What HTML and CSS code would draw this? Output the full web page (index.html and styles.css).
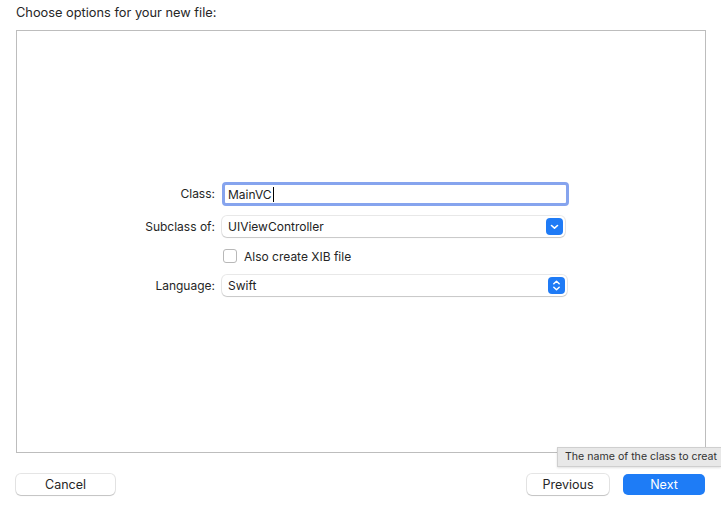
FILE: index.html
```html
<!DOCTYPE html>
<html>
<head>
<meta charset="utf-8">
<link rel="stylesheet" href="styles.css">
</head>
<body>
<div class="sheet">
  <div class="title">Choose options for your new file:</div>
  <div class="panel">
    <div class="form">
      <label class="lbl lbl-field">Class:</label>
      <div class="field focus"><span class="val">MainVC</span><span class="caret"></span></div>

      <label class="lbl">Subclass of:</label>
      <div class="popup combo"><span class="val">UIViewController</span>
        <span class="arrow"><svg width="17" height="17" viewBox="0 0 17 17"><path d="M5.5 7.5 L8.5 10.2 L11.5 7.5" fill="none" stroke="#fff" stroke-width="1.6" stroke-linecap="round" stroke-linejoin="round"/></svg></span>
      </div>

      <span class="lbl lbl-check"></span>
      <div class="check"><span class="box"></span><span>Also create XIB file</span></div>

      <label class="lbl">Language:</label>
      <div class="popup"><span class="val">Swift</span>
        <span class="arrow"><svg width="17" height="17" viewBox="0 0 17 17"><path d="M5.8 6.8 L8.5 4.3 L11.2 6.8 M5.8 10.2 L8.5 12.7 L11.2 10.2" fill="none" stroke="#fff" stroke-width="1.5" stroke-linecap="round" stroke-linejoin="round"/></svg></span>
      </div>
    </div>
  </div>
  <div class="footer">
    <button class="btn">Cancel</button>
    <div class="right">
      <button class="btn prev">Previous</button>
      <button class="btn primary">Next</button>
    </div>
  </div>
  <div class="tooltip">The name of the class to creat</div>
</div>
</body>
</html>
```
FILE: styles.css
```css
* { box-sizing: border-box; }
html, body { margin: 0; padding: 0; background: #fff; }
body {
  font-family: Inter, "Noto Sans", "Liberation Sans", sans-serif;
  font-size: 12px;
  color: #222;
  width: 721px;
  height: 511px;
  overflow: hidden;
}
.sheet {
  position: relative;
  height: 511px;
  padding: 4px 16px 0 16px;
  display: flex;
  flex-direction: column;
}
.title {
  height: 26px;
  line-height: 18px;
  font-size: 12.8px;
  color: #262626;
}
.panel {
  width: 690px;
  height: 423px;
  border: 1px solid #bdbdbd;
  background: #fff;
  padding-top: 151px;
}
.form {
  display: grid;
  grid-template-columns: 198px 349px;
  grid-template-rows: 24px 31px 26px 33px;
  column-gap: 7px;
  align-items: end;
}
.lbl {
  text-align: right;
  color: #262626;
  line-height: 21px;
}
.lbl-field { line-height: 24px; }
.lbl-check { line-height: 14px; }
.field {
  height: 24px;
  border: 3px solid #86a4ee;
  border-radius: 4px;
  display: flex;
  align-items: center;
  padding-left: 3px;
  width: 347px;
}
.field .val { color: #1e1e1e; }
.caret {
  display: inline-block;
  width: 1px;
  height: 15px;
  background: #000;
  margin-left: 1px;
}
.popup {
  height: 21px;
  width: 345px;
  border-radius: 5px;
  background: #fff;
  box-shadow: 0 0 0 1px rgba(0,0,0,0.09), 0 1px 1px rgba(0,0,0,0.14);
  display: flex;
  align-items: center;
  justify-content: space-between;
  padding: 0 2px 0 6px;
}
.popup.combo { width: 343px; }
.arrow {
  width: 17px;
  height: 17px;
  border-radius: 4px;
  background: #1f7bf6;
  display: flex;
}
.check {
  height: 14px;
  display: flex;
  align-items: center;
  gap: 7px;
  padding-left: 1px;
  color: #262626;
}
.box {
  width: 14px;
  height: 14px;
  border-radius: 3px;
  border: 1px solid #b8b8b8;
  background: #fff;
}
.footer {
  margin-top: 21px;
  display: flex;
  justify-content: space-between;
}
.right { display: flex; gap: 14px; }
.btn {
  font-family: inherit;
  font-size: 12.5px;
  height: 21px;
  border: none;
  border-radius: 5px;
  background: #fff;
  color: #262626;
  box-shadow: 0 0 0 1px rgba(0,0,0,0.1), 0 1px 1px rgba(0,0,0,0.15);
  width: 99px;
  padding: 0;
}
.btn.prev { width: 82px; }
.btn.primary {
  width: 82px;
  background: #1e7cf6;
  color: #fff;
  box-shadow: none;
}
.tooltip {
  position: absolute;
  left: 557px;
  top: 447px;
  height: 20px;
  width: 164px;
  background: #e8e8e8;
  border: 1px solid #cfcfcf;
  border-right: none;
  box-shadow: 0 1px 2px rgba(0,0,0,0.12);
  font-size: 10.6px;
  color: #333;
  line-height: 18px;
  padding-left: 7px;
  white-space: nowrap;
  overflow: hidden;
}
```
